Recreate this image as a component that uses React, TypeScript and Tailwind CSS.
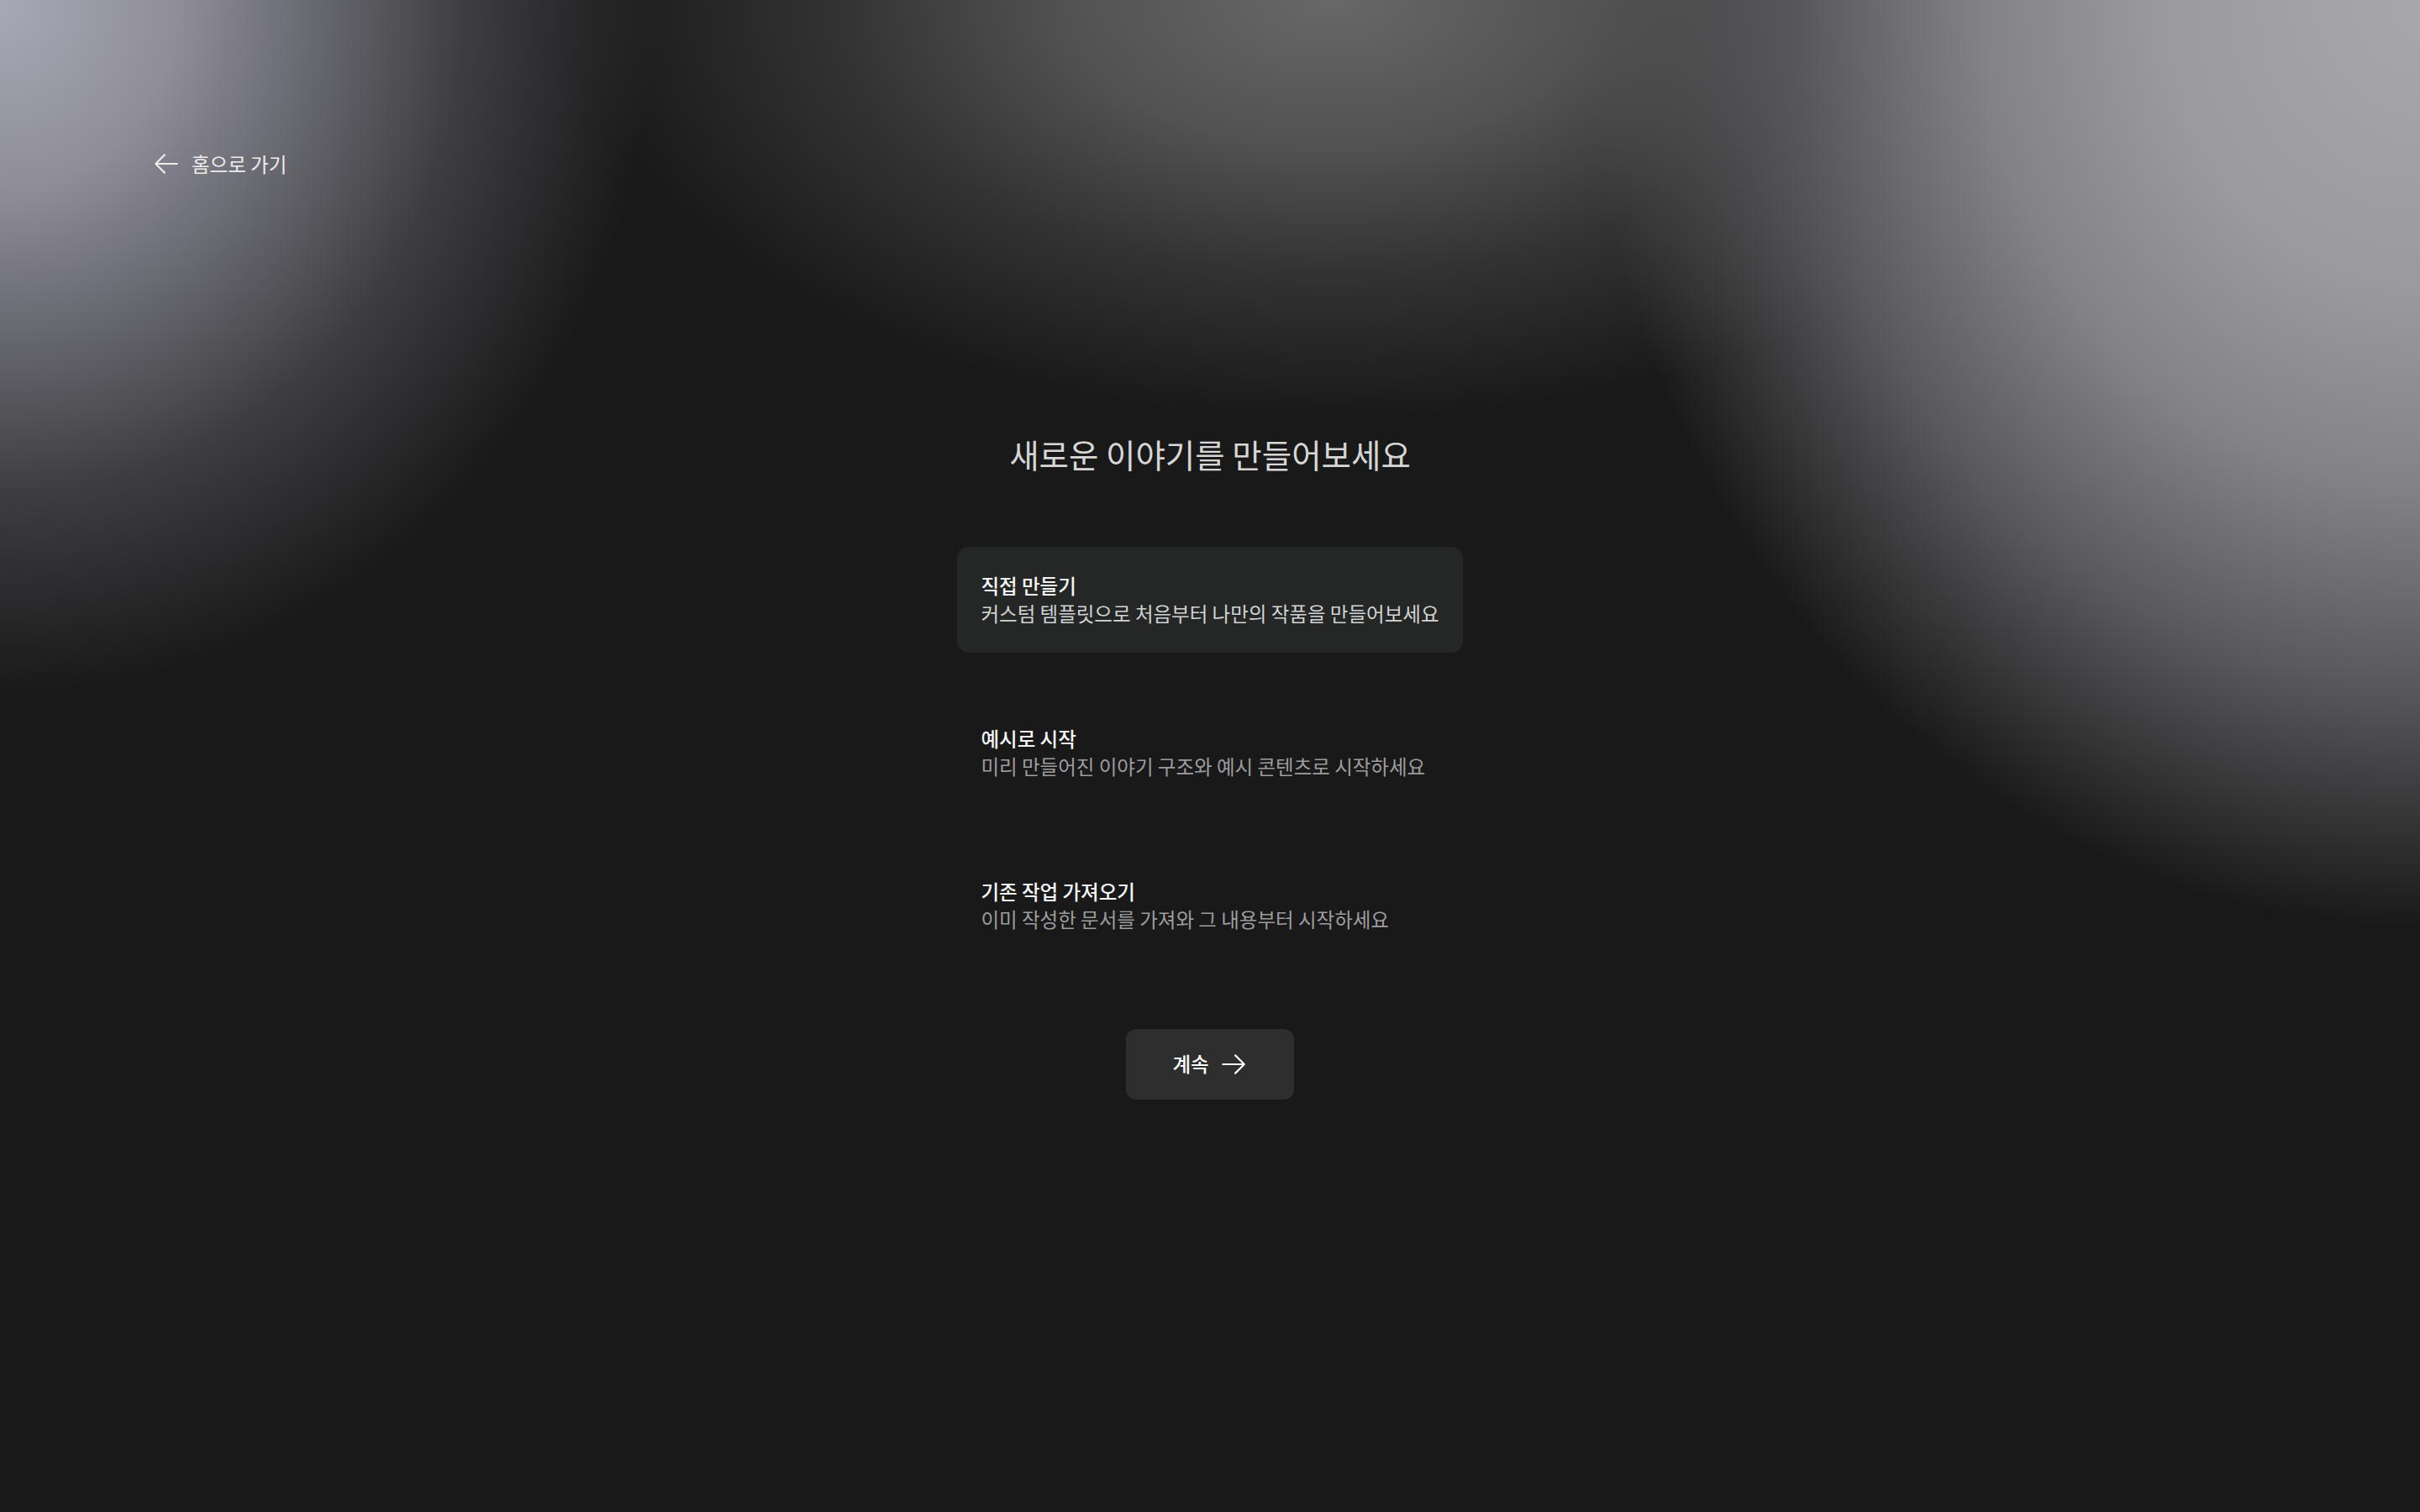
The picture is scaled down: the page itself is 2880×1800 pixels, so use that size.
import { useState } from "react";

type Option = {
  id: string;
  title: string;
  description: string;
};

const options: Option[] = [
  { id: "custom", title: "직접 만들기", description: "커스텀 템플릿으로 처음부터 나만의 작품을 만들어보세요" },
  { id: "example", title: "예시로 시작", description: "미리 만들어진 이야기 구조와 예시 콘텐츠로 시작하세요" },
  { id: "import", title: "기존 작업 가져오기", description: "이미 작성한 문서를 가져와 그 내용부터 시작하세요" },
];

function Arrow({ dir }: { dir: "left" | "right" }) {
  return (
    <svg
      viewBox="0 0 24 24"
      fill="none"
      stroke="currentColor"
      strokeWidth={1.5}
      strokeLinecap="round"
      strokeLinejoin="round"
      className="w-[34px] h-[34px] shrink-0"
    >
      {dir === "left" ? (
        <path d="M10.5 19.5 3 12m0 0 7.5-7.5M3 12h18" />
      ) : (
        <path d="M13.5 4.5 21 12m0 0-7.5 7.5M21 12H3" />
      )}
    </svg>
  );
}

export default function App() {
  const [selected, setSelected] = useState("custom");

  return (
    <div className="min-h-screen w-full bg-[#191919] bg-[radial-gradient(850px_900px_at_0%_0%,#a9a8b6_0%,#8e8d99_25%,#66666d_45%,#3e3e42_65%,rgba(25,25,25,0)_92%),radial-gradient(1080px_1200px_at_100%_0%,#a8a8ab_0%,#9b9b9e_28%,#838387_48%,#59595c_68%,rgba(25,25,25,0)_92%),radial-gradient(900px_500px_at_55%_0%,#686868_0%,#525252_35%,#333333_65%,rgba(25,25,25,0)_100%)] bg-no-repeat font-['Noto_Sans_CJK_KR',sans-serif] text-white">
      <header className="pl-[181px] pt-[178px]">
        <button className="flex items-center gap-[13px] text-[23.5px] leading-[34px] text-[#ececec]">
          <Arrow dir="left" />
          <span>홈으로 가기</span>
        </button>
      </header>

      <main className="flex flex-col items-center pb-[200px]">
        <h1 className="mt-[301px] text-[38.5px] leading-[54px] font-normal text-[#d6d6d6]">
          새로운 이야기를 만들어보세요
        </h1>

        <div className="mt-[84px] flex flex-col gap-[56px]">
          {options.map((o) => {
            const active = o.id === selected;
            return (
              <button
                key={o.id}
                onClick={() => setSelected(o.id)}
                className={`text-left rounded-[14px] px-[28px] py-[30px] text-[23.5px] leading-[33px] ${
                  active ? "bg-[#252626]" : "bg-transparent"
                }`}
              >
                <div className="font-medium text-[#f5f5f5]">{o.title}</div>
                <div className={active ? "text-[#d2d3d3]" : "text-[#9d9d9f]"}>{o.description}</div>
              </button>
            );
          })}
        </div>

        <button className="mt-[84px] w-[200px] h-[84px] rounded-[12px] bg-[#2e2e2e] flex items-center justify-center gap-[12px] text-[23.5px] font-medium text-white">
          <span>계속</span>
          <Arrow dir="right" />
        </button>
      </main>
    </div>
  );
}
